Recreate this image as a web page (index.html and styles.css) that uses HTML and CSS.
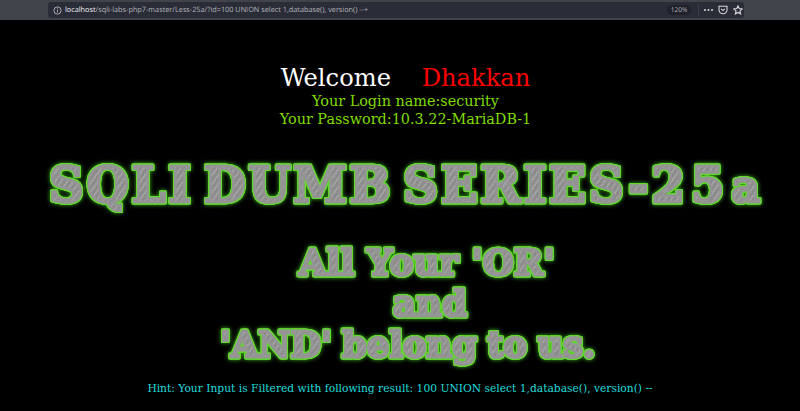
FILE: index.html
```html
<!DOCTYPE html>
<html lang="en">
<head>
    <meta charset="UTF-8">
    <title>Less-25a</title>
    <link rel="stylesheet" href="styles.css">
</head>
<body>
    <div class="toolbar">
        <div class="urlbar">
            <svg class="info-icon" width="9" height="9" viewBox="0 0 9 9" fill="none" stroke="#b4b5bb" stroke-width="0.9">
                <circle cx="4.5" cy="4.5" r="3.6"/>
                <path d="M4.5 4v2.4M4.5 2.4v.9"/>
            </svg>
            <div class="url"><b>localhost</b>/sqli-labs-php7-master/Less-25a/?id=100 UNION select 1,database(), version() --+</div>
            <div class="zoom-badge">120%</div>
            <div class="divider"></div>
            <svg class="bar-icon" width="9" height="10" viewBox="0 0 9 10" fill="#d6d7da">
                <circle cx="1" cy="5" r="1"/>
                <circle cx="4.5" cy="5" r="1"/>
                <circle cx="8" cy="5" r="1"/>
            </svg>
            <svg class="bar-icon" width="10" height="10" viewBox="0 0 10 10" fill="none" stroke="#d6d7da" stroke-width="1.1">
                <path d="M1 1.3h8v3.4a4 4 0 0 1-8 0z"/>
                <path d="M3.2 3.9L5 5.6l1.8-1.7"/>
            </svg>
            <svg width="10" height="10" viewBox="0 0 10 10" fill="none" stroke="#d6d7da" stroke-width="1.1">
                <path d="M5 .9l1.25 2.7 2.95.35-2.2 2 .6 2.9L5 7.4 2.4 8.85l.6-2.9-2.2-2 2.95-.35z"/>
            </svg>
        </div>
    </div>
    <main class="page">
        <div class="login-box">
            <div class="welcome">Welcome <span class="gap"></span><span class="name">Dhakkan</span></div>
            <div class="result">Your Login name:security<br>Your Password:10.3.22-MariaDB-1</div>
        </div>
        <h1 class="chrome-text title">SQLI DUMB SERIES-<span class="wide">2</span>5<span class="small-a">a</span></h1>
        <div class="slogan">
            <div class="chrome-text line-or">All Your 'OR'</div>
            <div class="chrome-text line-mid">and</div>
            <div class="chrome-text line-and">'AND' belong to us.</div>
        </div>
        <div class="hint">Hint: Your Input is Filtered with following result: 100 UNION select 1,database(), version() --</div>
    </main>
</body>
</html>
```

FILE: styles.css
```css
html, body {
    margin: 0;
    padding: 0;
    height: 100%;
    overflow: hidden;
}
body {
    background: #000;
    font-family: "DejaVu Serif", serif;
}
.toolbar {
    height: 20px;
    background: #42444c;
    padding: 2px 56px 0 48px;
    box-sizing: border-box;
}
.urlbar {
    height: 16px;
    background: #2a2c38;
    border-radius: 3px;
    display: flex;
    align-items: center;
    padding: 0 1px 0 5px;
    color: #b4b5bb;
    font-family: "Open Sans", sans-serif;
    font-size: 7.3px;
    text-rendering: geometricPrecision;
}
.info-icon {
    margin-right: 3px;
}
.url {
    flex: 1;
    white-space: nowrap;
}
.url b {
    font-weight: 400;
    color: #f0f0f2;
}
.zoom-badge {
    width: 24px;
    height: 10px;
    line-height: 10px;
    text-align: center;
    border-radius: 5px;
    background: #1f212b;
    font-size: 6.5px;
    margin-right: 7px;
}
.divider {
    width: 1px;
    height: 12px;
    background: #3b3d48;
    margin-right: 5px;
}
.bar-icon {
    margin-right: 5px;
}
.page {
    text-align: center;
}
.login-box {
    padding-left: 11px;
}
.welcome {
    margin-top: 44px;
    font-size: 24.2px;
    line-height: 28px;
    color: #fff;
}
.gap {
    display: inline-block;
    width: 23px;
}
.name {
    color: #f00;
}
.result {
    font-size: 14.4px;
    line-height: 17.5px;
    color: #7fdc00;
    margin-top: 1px;
}
.chrome-text {
    margin: 0;
    font-family: "DejaVu Serif", serif;
    font-weight: 900;
    color: transparent;
    -webkit-text-stroke: 2.4px #959595;
    background: repeating-linear-gradient(-55deg, #8c8c8c 0 3px, #a0a0a0 3px 5px);
    -webkit-background-clip: text;
    background-clip: text;
    width: fit-content;
    white-space: nowrap;
    filter: drop-shadow(1px 0 0 #62d82e) drop-shadow(-1px 0 0 #62d82e) drop-shadow(0 1px 0 #62d82e) drop-shadow(0 -1px 0 #62d82e) drop-shadow(0 0 2px #3ca81a);
}
.title {
    margin-top: 29px;
    margin-left: 49px;
    padding: 0 6px 0 0;
    font-size: 48px;
    line-height: 56px;
    letter-spacing: 3.1px;
    word-spacing: -10px;
}
.wide {
    letter-spacing: 6px;
}
.small-a {
    font-size: 44px;
    margin-left: 4px;
}
.slogan {
    margin-top: 27px;
    text-align: left;
}
.slogan .chrome-text {
    font-size: 35px;
    line-height: 41px;
    letter-spacing: 0.6px;
    padding-right: 4px;
}
.line-or {
    margin-left: 299px;
}
.line-mid {
    margin-left: 393px;
}
.slogan .line-and {
    margin-left: 220px;
    letter-spacing: 0.2px;
    word-spacing: -2px;
}
.hint {
    margin-top: 16px;
    font-size: 10.7px;
    line-height: 16px;
    color: #1fdcdc;
}
```
